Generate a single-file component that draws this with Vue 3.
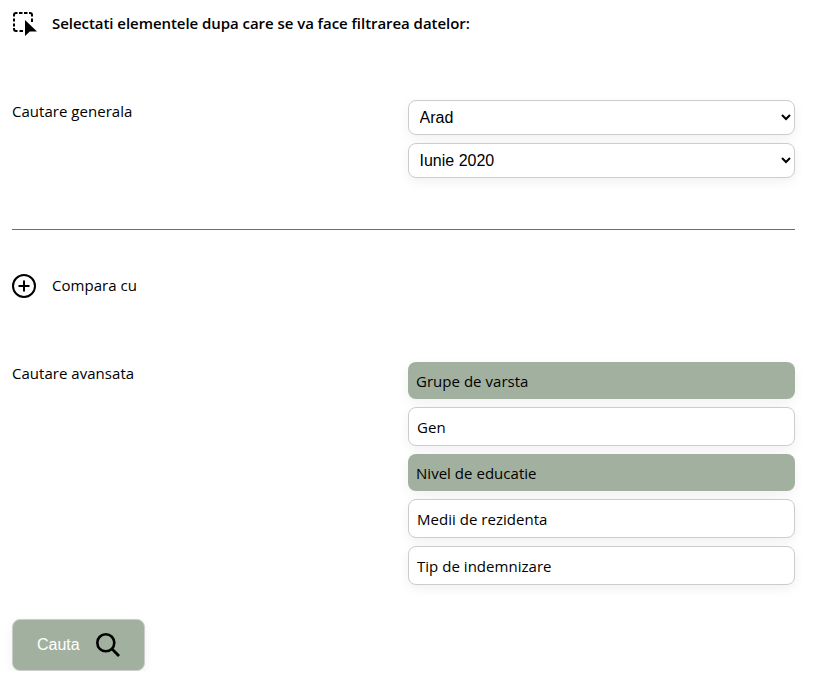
<script setup>
import { ref } from 'vue'

const county = ref('Arad')
const month = ref('Iunie 2020')
const filters = ref([
  { label: 'Grupe de varsta', active: true },
  { label: 'Gen', active: false },
  { label: 'Nivel de educatie', active: true },
  { label: 'Medii de rezidenta', active: false },
  { label: 'Tip de indemnizare', active: false },
])
</script>

<template>
  <main class="page">
    <header class="heading">
      <svg class="icon" viewBox="0 0 24 24" width="24" height="24" fill="none" stroke="#000" stroke-width="2">
        <path d="M2 5.5V4Q2 2 4 2H5.5M7 2h3.5M12 2h3.5M17 2h1Q20 2 20 4V5.5M20 7.5v3.5M2 7.5v3M2 12.5v3M2 17v1Q2 20 4 20H5.5M7.5 20h3.5" />
        <path d="M13 9V25l4.8-4.6H25z" fill="#000" stroke="none" />
      </svg>
      <h1 class="title">Selectati elementele dupa care se va face filtrarea datelor:</h1>
    </header>

    <section class="row general">
      <span class="label">Cautare generala</span>
      <div class="stack">
        <select v-model="county" class="select"><option>Arad</option></select>
        <select v-model="month" class="select"><option>Iunie 2020</option></select>
      </div>
    </section>

    <div class="divider"></div>

    <div class="compare">
      <svg class="icon" viewBox="0 0 24 24" width="24" height="24" fill="none" stroke="#000" stroke-width="2">
        <circle cx="12" cy="12" r="11" />
        <path d="M12 6.5v11M6.5 12h11" />
      </svg>
      <span class="compare-label">Compara cu</span>
    </div>

    <section class="row advanced">
      <span class="label">Cautare avansata</span>
      <div class="stack">
        <div
          v-for="f in filters"
          :key="f.label"
          class="option"
          :class="{ active: f.active }"
          @click="f.active = !f.active"
        >{{ f.label }}</div>
      </div>
    </section>

    <button class="search">
      <span>Cauta</span>
      <svg viewBox="0 0 24 24" width="24" height="24" fill="none" stroke="#000">
        <circle cx="9.8" cy="9.8" r="8.5" stroke-width="2.6" />
        <path d="M15.8 15.8l7.2 7.2" stroke-width="2.8" />
      </svg>
    </button>
  </main>
</template>

<style>
body {
  background: #fff;
}
</style>

<style scoped>
.page {
  width: 783px;
  padding: 11px 0 0 12px;
  font-family: "Open Sans", "Noto Sans", sans-serif;
  font-size: 15px;
  font-weight: 400;
  letter-spacing: 0.03px;
  line-height: 21px;
  color: #000;
}
.heading,
.compare {
  display: flex;
  align-items: center;
  gap: 16px;
  height: 24px;
}
.icon {
  display: block;
  overflow: visible;
}
.title {
  margin: 0;
  font-size: 15px;
  font-weight: 600;
  letter-spacing: -0.05px;
  line-height: 21px;
  white-space: nowrap;
}
.label {
  padding-top: 1px;
}
.compare-label {
  padding-bottom: 2px;
}
.row {
  display: grid;
  grid-template-columns: 388px 387px;
  column-gap: 8px;
}
.general {
  margin-top: 65px;
}
.stack {
  display: flex;
  flex-direction: column;
  gap: 8px;
}
.select {
  box-sizing: border-box;
  width: 100%;
  height: 35px;
  padding: 0 2px 0 6.5px;
  border: 1px solid #ccc;
  border-radius: 8px;
  background-color: #fff;
  color: #000;
  font-family: "Liberation Sans", Arial, sans-serif;
  font-size: 16px;
  letter-spacing: 0;
  box-shadow: 0 4px 12px rgba(0, 0, 0, 0.06);
}
.divider {
  height: 1px;
  margin-top: 51px;
  background: #6e6e6e;
}
.compare {
  margin-top: 44px;
}
.advanced {
  margin-top: 64px;
}
.option {
  box-sizing: border-box;
  height: 39px;
  padding: 9px 8px 7px;
  border: 1px solid #ccc;
  border-radius: 8px;
  background: #fff;
  box-shadow: 0 4px 12px rgba(0, 0, 0, 0.06);
  cursor: pointer;
}
.option.active {
  height: 37px;
  border: 0;
  background: #a2b19f;
}
.search {
  box-sizing: border-box;
  display: flex;
  align-items: center;
  gap: 16px;
  width: 133px;
  height: 52px;
  margin-top: 34px;
  padding: 0 24px;
  border: 1px solid #ccc;
  border-radius: 8px;
  background: #a2b19f;
  color: #fff;
  font-family: "Liberation Sans", Arial, sans-serif;
  font-size: 16px;
  letter-spacing: 0;
  box-shadow: 0 4px 12px rgba(0, 0, 0, 0.06);
}
</style>
